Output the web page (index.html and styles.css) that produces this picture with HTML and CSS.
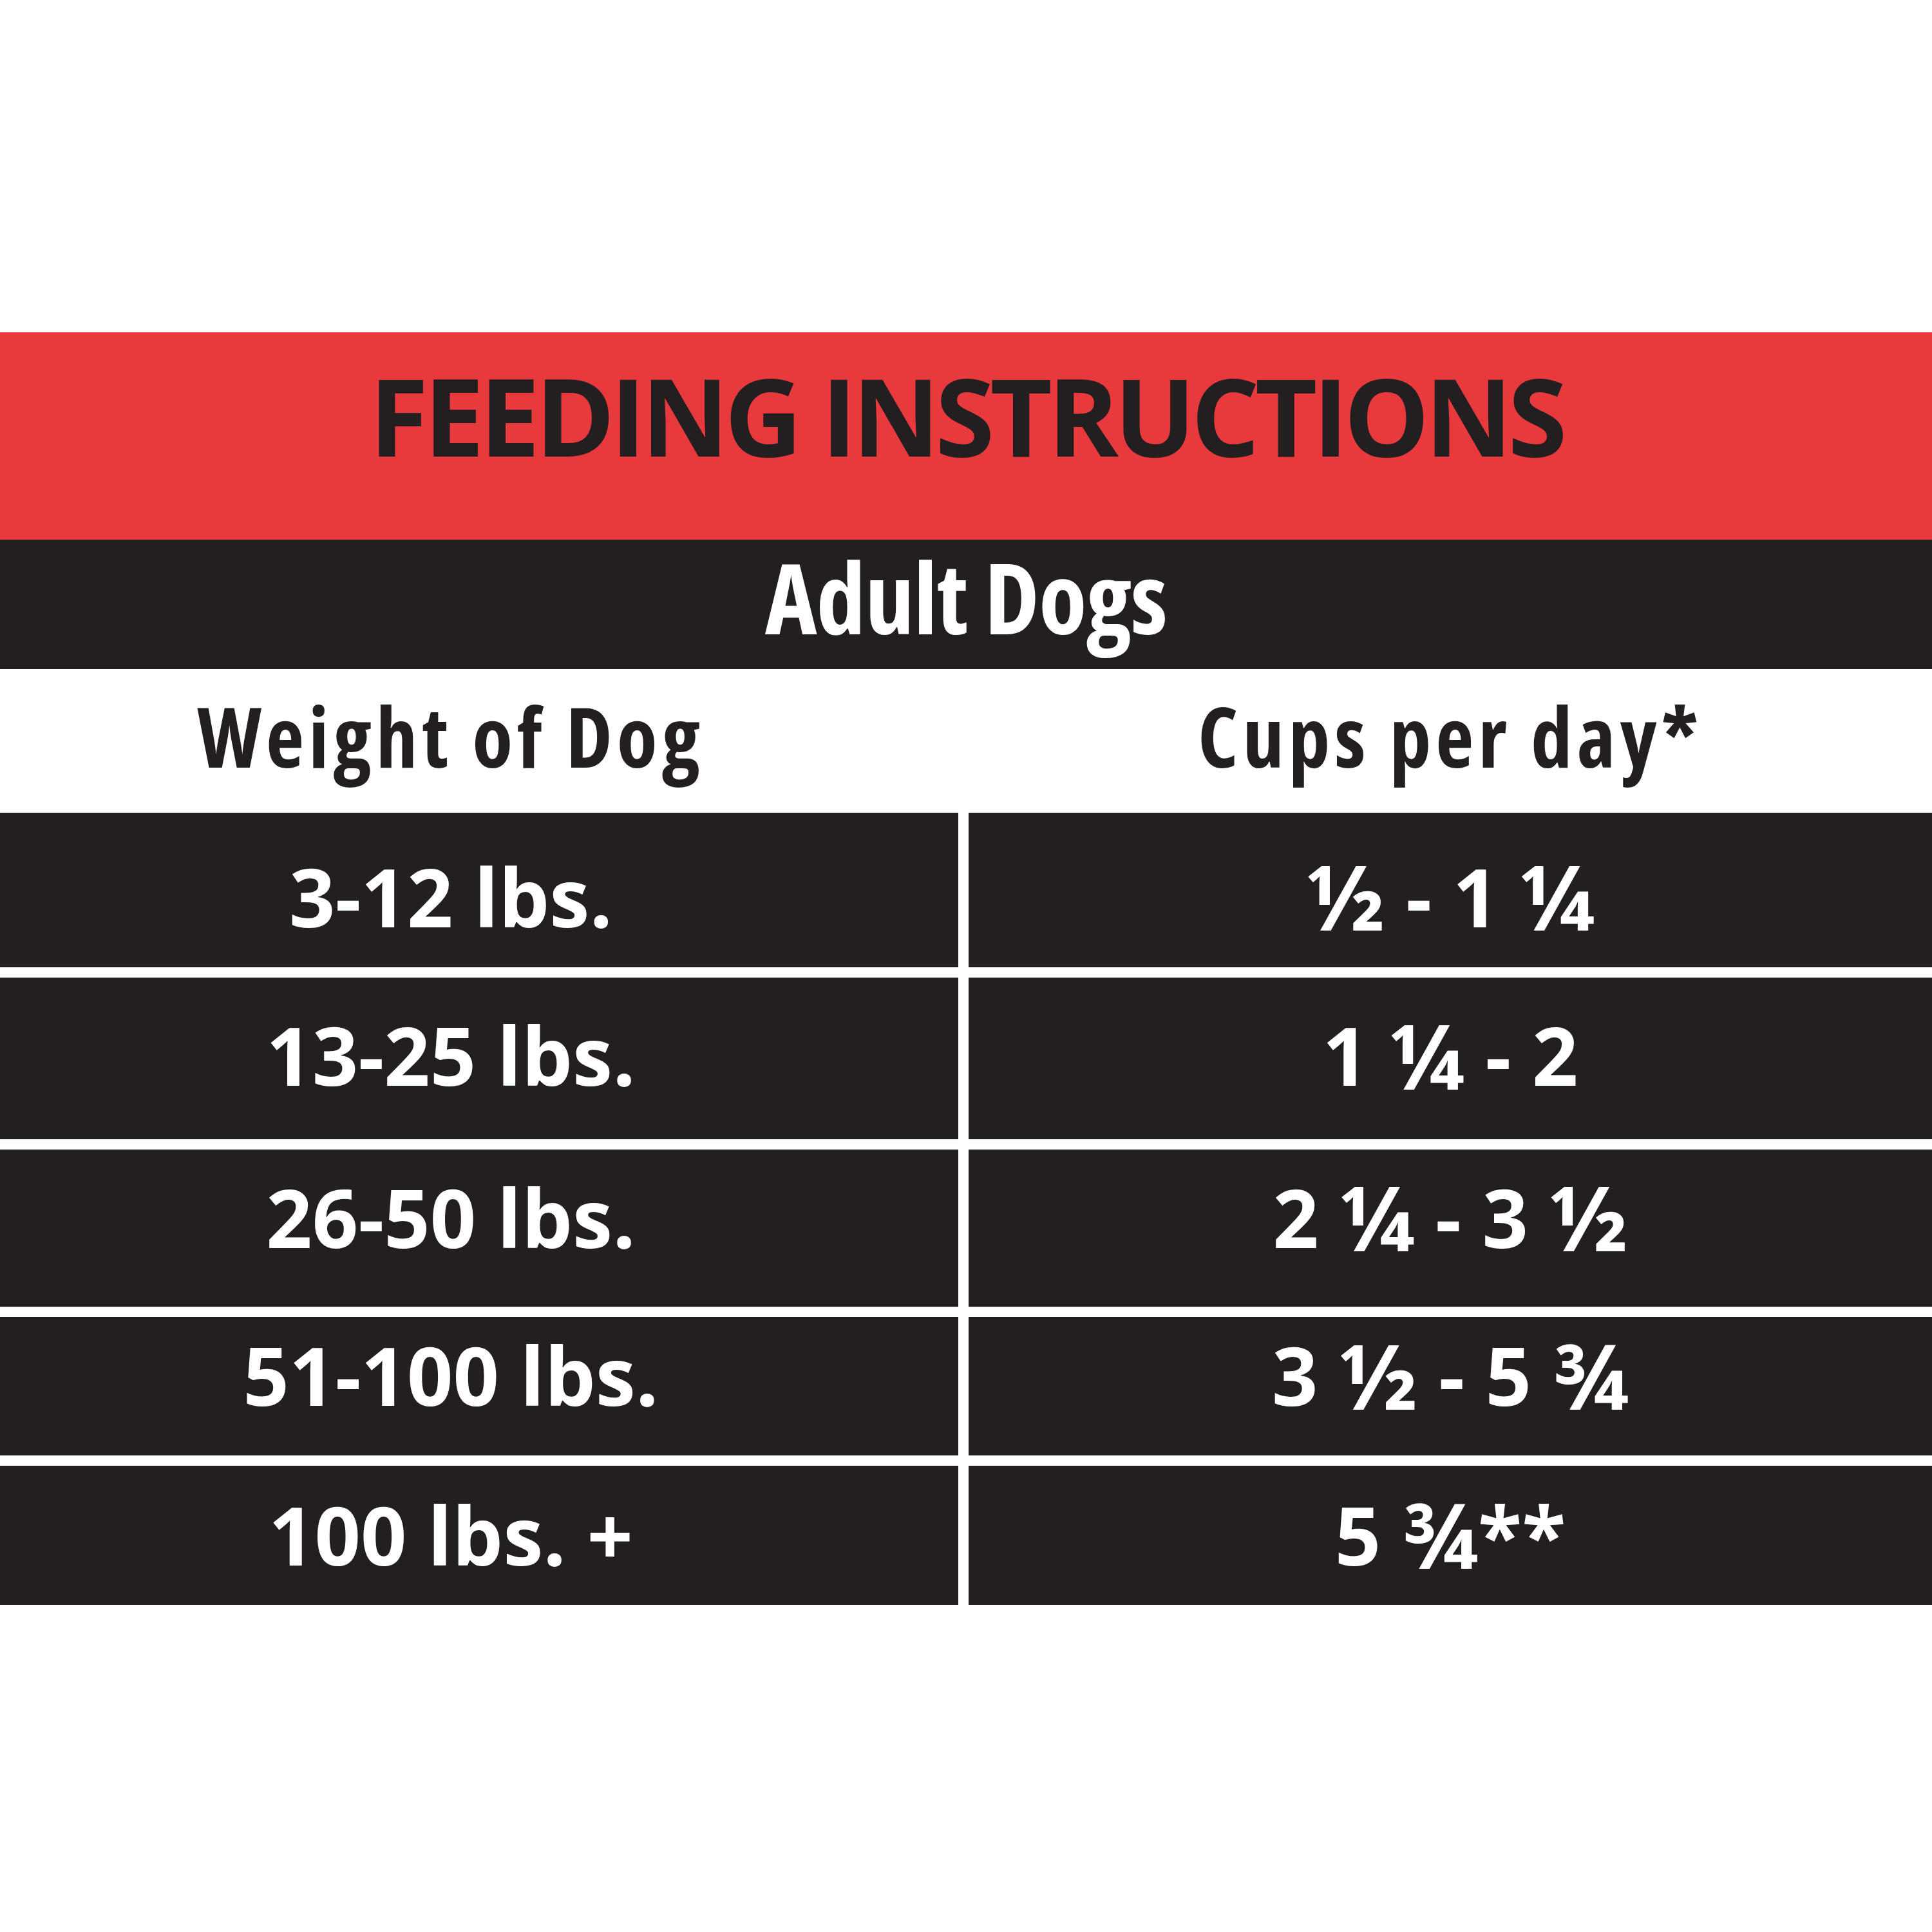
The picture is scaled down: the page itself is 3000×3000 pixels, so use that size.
FILE: index.html
```html
<!DOCTYPE html>
<html lang="en">
<head>
<meta charset="utf-8">
<title>Feeding Instructions</title>
<link rel="stylesheet" href="styles.css">
</head>
<body>
<main class="sheet">
  <header class="title-band">
    <h1 class="title">FEEDING INSTRUCTIONS</h1>
  </header>
  <section class="sub-band">
    <h2 class="subtitle">Adult Dogs</h2>
  </section>
  <section class="chart">
    <div class="head head-left">Weight of Dog</div>
    <div class="head head-right">Cups per day*</div>

    <div class="cell cell-left r1">3-12 lbs.</div>
    <div class="cell cell-right r1"><span class="frac">½</span>&nbsp;-&nbsp;1 <span class="frac">¼</span></div>

    <div class="cell cell-left r2">13-25 lbs.</div>
    <div class="cell cell-right r2">1 <span class="frac">¼</span>&nbsp;-&nbsp;2</div>

    <div class="cell cell-left r3">26-50 lbs.</div>
    <div class="cell cell-right r3">2 <span class="frac">¼</span>&nbsp;-&nbsp;3 <span class="frac">½</span></div>

    <div class="cell cell-left r4">51-100 lbs.</div>
    <div class="cell cell-right r4">3 <span class="frac">½</span>&nbsp;-&nbsp;5 <span class="frac">¾</span></div>

    <div class="cell cell-left r5">100 lbs. +</div>
    <div class="cell cell-right r5">5 <span class="frac">¾</span>**</div>
  </section>
</main>
</body>
</html>
```

FILE: styles.css
```css
html, body {
  margin: 0;
  padding: 0;
  background: #ffffff;
}

body {
  width: 3000px;
  height: 3000px;
  font-family: "Open Sans", "Liberation Sans", sans-serif;
  font-weight: 700;
  color: #231f20;
}

.sheet {
  padding-top: 516px;
  display: flex;
  flex-direction: column;
}

.title-band {
  height: 322px;
  box-sizing: border-box;
  background: #e8393d;
  display: flex;
  align-items: center;
  justify-content: center;
  padding-bottom: 66px;
}

.title {
  margin: 0;
  font-size: 167px;
  line-height: 1;
  font-weight: 700;
  letter-spacing: -7px;
  color: #231f20;
}

.sub-band {
  height: 201px;
  box-sizing: border-box;
  background: #231f20;
  display: flex;
  align-items: center;
  justify-content: center;
  padding-bottom: 26px;
}

.subtitle {
  margin: 0;
  font-size: 153px;
  line-height: 1;
  font-weight: 700;
  font-stretch: 75%;
  letter-spacing: -1px;
  color: #ffffff;
}

.chart {
  display: grid;
  grid-template-columns: 1488px 1496px;
  grid-template-rows: 207px 240px 251px 244px 215px 216px;
  column-gap: 16px;
  row-gap: 16px;
}

.head {
  display: flex;
  align-items: center;
  justify-content: center;
  font-size: 129px;
  line-height: 1;
  font-stretch: 87.5%;
  letter-spacing: 7px;
  color: #231f20;
  white-space: pre;
}

.head-left {
  padding-right: 88px;
}

.cell {
  background: #231f20;
  color: #ffffff;
  display: flex;
  align-items: center;
  justify-content: center;
  font-size: 125px;
  line-height: 1;
  box-sizing: border-box;
  white-space: pre;
}

.frac {
  font-size: 1.12em;
  line-height: 1;
}

.cell-left {
  padding-right: 88px;
}

.r1 { padding-top: 18px; }
.r2 { padding-bottom: 12px; }
.r3 { padding-bottom: 36px; }
.r4 { padding-bottom: 36px; }
.r5 { padding-bottom: 4px; }
```
